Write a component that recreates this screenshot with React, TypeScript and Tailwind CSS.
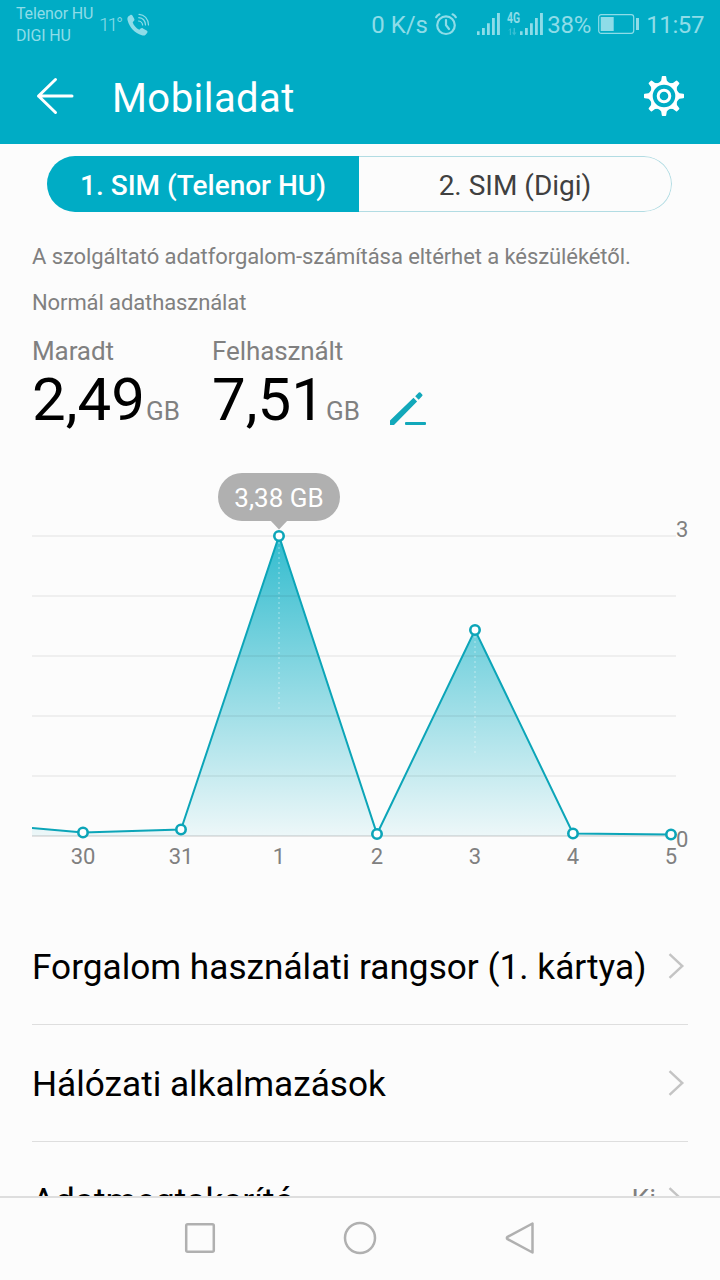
import React from 'react';

const points = [
  { label: '30', x: 83, y: 832.5 },
  { label: '31', x: 181, y: 829.5 },
  { label: '1', x: 279, y: 536 },
  { label: '2', x: 377, y: 834 },
  { label: '3', x: 475, y: 630 },
  { label: '4', x: 573, y: 833.5 },
  { label: '5', x: 671, y: 834.5 },
];

const line = 'M32 828L' + points.map((p) => `${p.x} ${p.y}`).join('L');

function Signal() {
  return (
    <svg width="24" height="22" viewBox="0 0 24 22" fill="currentColor">
      <path d="M0 18.3h2.6V22H0zM5 15h2.8v7H5zM10 10.3h2.8V22H10zM15 5h2.8v17H15zM20 0h2.9v22H20z" />
    </svg>
  );
}

function StatusBar() {
  return (
    <div className="flex h-12 text-[#8edce8]">
      <div className="ml-4 w-[83px] pt-[3px] text-base leading-[22px] tracking-[-0.15px] whitespace-nowrap">
        <p>Telenor HU</p>
        <p>DIGI HU</p>
      </div>
      <span className="w-[28px] pt-[13px] text-[19px] leading-6 font-light tracking-[-2px]">11°</span>
      <svg className="mt-[13px]" width="23" height="24" viewBox="0 0 23 24" fill="none" stroke="currentColor">
        <path
          fill="currentColor"
          stroke="none"
          d="M1.2 3.600 3.100 2.200C3.900 1.600 4.900 1.700 5.400 2.500L7.200 5.800C7.700 6.700 7.500 7.400 6.800 8L5.700 9.200C6.400 12 9.300 15.300 12.300 16.700L13.600 15.600C14.400 14.900 15.200 14.900 16 15.400L19.600 17.500C20.600 18.200 20.800 19 20.100 19.900L18.600 21.700C17.600 22.800 16.300 22.800 14.800 22.300C7.700 19.700 2.600 14.500.7 7.700C.3 6.100.2 4.700 1.200 3.600Z"
        />
        <path strokeWidth="1.200" strokeLinecap="round" d="M12 1.300c5.300.3 9.300 4.500 9.500 10.700M11.800 4.700c3.700.3 6.400 3.200 6.700 7.300M11.600 8c2.200.3 3.700 1.800 4 4" />
      </svg>
      <div className="ml-auto flex h-12 pr-4 text-2xl leading-[50px] whitespace-nowrap">
        <span className="w-[64px]">0 K/s</span>
        <svg className="mt-[13px]" width="22" height="23" viewBox="0 0 22 23" fill="none" stroke="currentColor" strokeWidth="2.200" strokeLinecap="round">
          <circle cx="11" cy="12.200" r="8.800" />
          <path d="M11 7V12.200l3 3.800M1.200 4.200Q2.200 2.200 4.400 1.300M20.800 4.200Q19.800 2.200 17.600 1.300" />
        </svg>
        <div className="mt-[13px] ml-5">
          <Signal />
        </div>
        <svg className="ml-[6px] overflow-visible" width="13" height="36" viewBox="0 0 13 36" fill="currentColor">
          <text x="0" y="23" fontSize="14" fontWeight="700" textLength="13" lengthAdjust="spacingAndGlyphs">4G</text>
          <path opacity=".4" d="M4 28v7H2.800v-5L1 30.700zM6.500 28H8v4.500h1.500L7.200 35.500 5 32.500h1.500z" />
        </svg>
        <div className="mt-[13px]">
          <Signal />
        </div>
        <span className="ml-[3px] w-[51px] tracking-[-0.2px]">38%</span>
        <svg className="mt-[14px]" width="41" height="20" viewBox="0 0 41 20" fill="currentColor">
          <rect x=".7" y=".7" width="35" height="18.600" rx="2.500" fill="none" stroke="currentColor" strokeWidth="1.200" />
          <path d="M2.700 3h13v14h-13zM38 4h3v12h-3z" />
        </svg>
        <span className="ml-[7px] tracking-[-0.4px]">11:57</span>
      </div>
    </div>
  );
}

function Header() {
  return (
    <header className="flex h-24 items-center pr-9 pl-9 text-white">
      <svg width="38" height="38" viewBox="0 0 38 38" fill="none" stroke="currentColor" strokeWidth="3" strokeLinecap="round" strokeLinejoin="round">
        <path d="M36 19H2.500M19.500 2.500 2.500 19l17 16.500" />
      </svg>
      <h1 className="ml-[38px] pt-[5px] text-[40px] leading-[48px] tracking-[0.45px]">Mobiladat</h1>
      <svg className="ml-auto" width="40" height="40" viewBox="-20 -20 40 40" fill="none" stroke="currentColor" strokeWidth="3">
        <circle r="12.800" strokeWidth="3" />
        <circle r="5.800" />
        {[0, 45, 90, 135, 180, 225, 270, 315].map((a) => (
          <path key={a} transform={`rotate(${a})`} fill="currentColor" stroke="none" d="M-5-13-2.800-15.500-2.200-19.200q0-.8.800-.8h2.800q.8 0 .8.800l.6 3.700L5-13z" />
        ))}
      </svg>
    </header>
  );
}

function UsageChart() {
  return (
    <svg className="-ml-8 block max-w-none shrink-0" width="720" height="430" viewBox="0 460 720 430" fontSize="22">
      <defs>
        <linearGradient id="area" gradientUnits="userSpaceOnUse" x1="0" y1="536" x2="0" y2="836">
          <stop offset="0" stopColor="#00acc3" stopOpacity=".8" />
          <stop offset="1" stopColor="#00acc3" stopOpacity=".06" />
        </linearGradient>
        <clipPath id="plot">
          <path d="M32 460h645v430H32z" />
        </clipPath>
      </defs>
      <g clipPath="url(#plot)">
        <path fill="url(#area)" d={`${line}V836H32Z`} />
        <path stroke="#000" strokeOpacity=".05" strokeWidth="2" d="M32 536h644M32 596h644M32 656h644M32 716h644M32 776h644" />
        <path stroke="#000" strokeOpacity=".1" strokeWidth="2" d="M32 836h644" />
        <path stroke="#fff" strokeOpacity=".3" strokeWidth="1.500" strokeDasharray="2 3" d="M279 542v170M475 636v120" />
        <path fill="none" stroke="#0ca5b8" strokeWidth="2" d={line} />
        {points.map((p) => (
          <g key={p.label}>
            <circle cx={p.x} cy={p.y} r="4.700" fill="#fff" stroke="#0ca5b8" strokeWidth="2.600" />
            <text x={p.x} y="864" textAnchor="middle" fill="#808080">
              {p.label}
            </text>
          </g>
        ))}
      </g>
      <text x="676" y="537" fill="#808080">3</text>
      <text x="676" y="847" fill="#808080">0</text>
      <rect x="218" y="473" width="122" height="48" rx="24" fill="#b0b0b0" />
      <path fill="#b0b0b0" d="M270 520h18l-9 9.500z" />
      <text x="279" y="506.500" fontSize="26" textAnchor="middle" fill="#fff">3,38 GB</text>
    </svg>
  );
}

function Amount({ label, value }: { label: string; value: string }) {
  return (
    <div className="w-[180px] whitespace-nowrap">
      <p className="text-[26px] leading-[30px] tracking-[-0.1px] text-[#808080]">{label}</p>
      <p className="mt-[-1px] flex items-baseline text-[60px] leading-[70px] text-black">
        {value}
        <span className="ml-px text-[26px] leading-none text-[#808080]">GB</span>
      </p>
    </div>
  );
}

function Row({ title, value }: { title: string; value?: string }) {
  return (
    <div className="flex h-[117px] shrink-0 items-center border-b border-[#dedede]">
      <span className="pt-[2px] text-[35.2px] leading-[42px] whitespace-nowrap text-black">{title}</span>
      <div className="mr-[3px] ml-auto flex items-center">
        {value && <span className="mr-3 text-[28px] leading-8 text-[#808080]">{value}</span>}
        <svg width="17" height="26" viewBox="0 0 17 26" fill="none" stroke="#c4c4c4" strokeWidth="2.400">
          <path d="M1.500 1.200 14.300 13 1.500 24.800" />
        </svg>
      </div>
    </div>
  );
}

export default function App() {
  return (
    <div className="flex h-[1280px] w-[720px] flex-col overflow-hidden bg-[#fcfcfc] font-[Roboto,sans-serif]">
      <div className="h-36 shrink-0 bg-[#00acc5]">
        <StatusBar />
        <Header />
      </div>

      <main className="flex min-h-0 flex-1 flex-col overflow-hidden px-8">
        {/* SIM tabs */}
        <div className="mt-3 ml-[15px] flex h-14 w-[625px] shrink-0 overflow-hidden rounded-full text-[28px] leading-[60px]">
          <div className="w-[312px] bg-[#00acc5] text-center font-medium text-white">1. SIM (Telenor HU)</div>
          <div className="flex-1 rounded-r-full border border-l-0 border-[#b2dce3] text-center leading-[58px] text-[#404040]">2. SIM (Digi)</div>
        </div>

        <p className="mt-8 shrink-0 text-[22px] leading-[26px] tracking-[-0.08px] text-[#808080]">A szolgáltató adatforgalom-számítása eltérhet a készülékétől.</p>
        <p className="mt-5 shrink-0 text-[22px] leading-[26px] tracking-[-0.1px] text-[#808080]">Normál adathasználat</p>

        <div className="mt-5 flex h-[124px] shrink-0">
          <Amount label="Maradt" value="2,49" />
          <Amount label="Felhasznált" value="7,51" />
          <svg className="mt-[55px] ml-[-3px]" width="38" height="36" viewBox="0 0 38 36" fill="#12a8ba">
            <path d="M1 29.500 24.500 6.800l3.600 3.800L5 34H1zM26.200 5.200 29.800 1.500q.8-.7 1.600 0l1.800 1.900q.8.800 0 1.600L29.700 8.800z" />
            <rect x="16" y="31" width="21" height="3" rx="1" />
          </svg>
        </div>

        <UsageChart />

        <div className="mt-[18px] flex shrink-0 flex-col">
          <Row title="Forgalom használati rangsor (1. kártya)" />
          <Row title="Hálózati alkalmazások" />
          <Row title="Adatmegtakarító" value="Ki" />
        </div>
      </main>

      {/* Navigation keys */}
      <nav className="flex h-[84px] shrink-0 items-center justify-center gap-32 border-t-2 border-[#dedede] pb-[2px] text-[#b0b0b0]">
        <svg width="32" height="32" viewBox="0 0 32 32" fill="none" stroke="currentColor" strokeWidth="2.500">
          <rect x="2.200" y="2.200" width="27.600" height="27.600" rx="1.500" />
        </svg>
        <svg width="32" height="34" viewBox="0 0 32 34" className="overflow-visible" fill="none" stroke="currentColor" strokeWidth="2.500">
          <circle cx="16" cy="17" r="15" />
        </svg>
        <svg width="32" height="32" viewBox="0 0 32 32" fill="none" stroke="currentColor" strokeWidth="2.500" strokeLinejoin="round">
          <path d="M28.500 1.500v29L3.600 17.200q-1.500-1.200 0-2.400z" />
        </svg>
      </nav>
    </div>
  );
}
